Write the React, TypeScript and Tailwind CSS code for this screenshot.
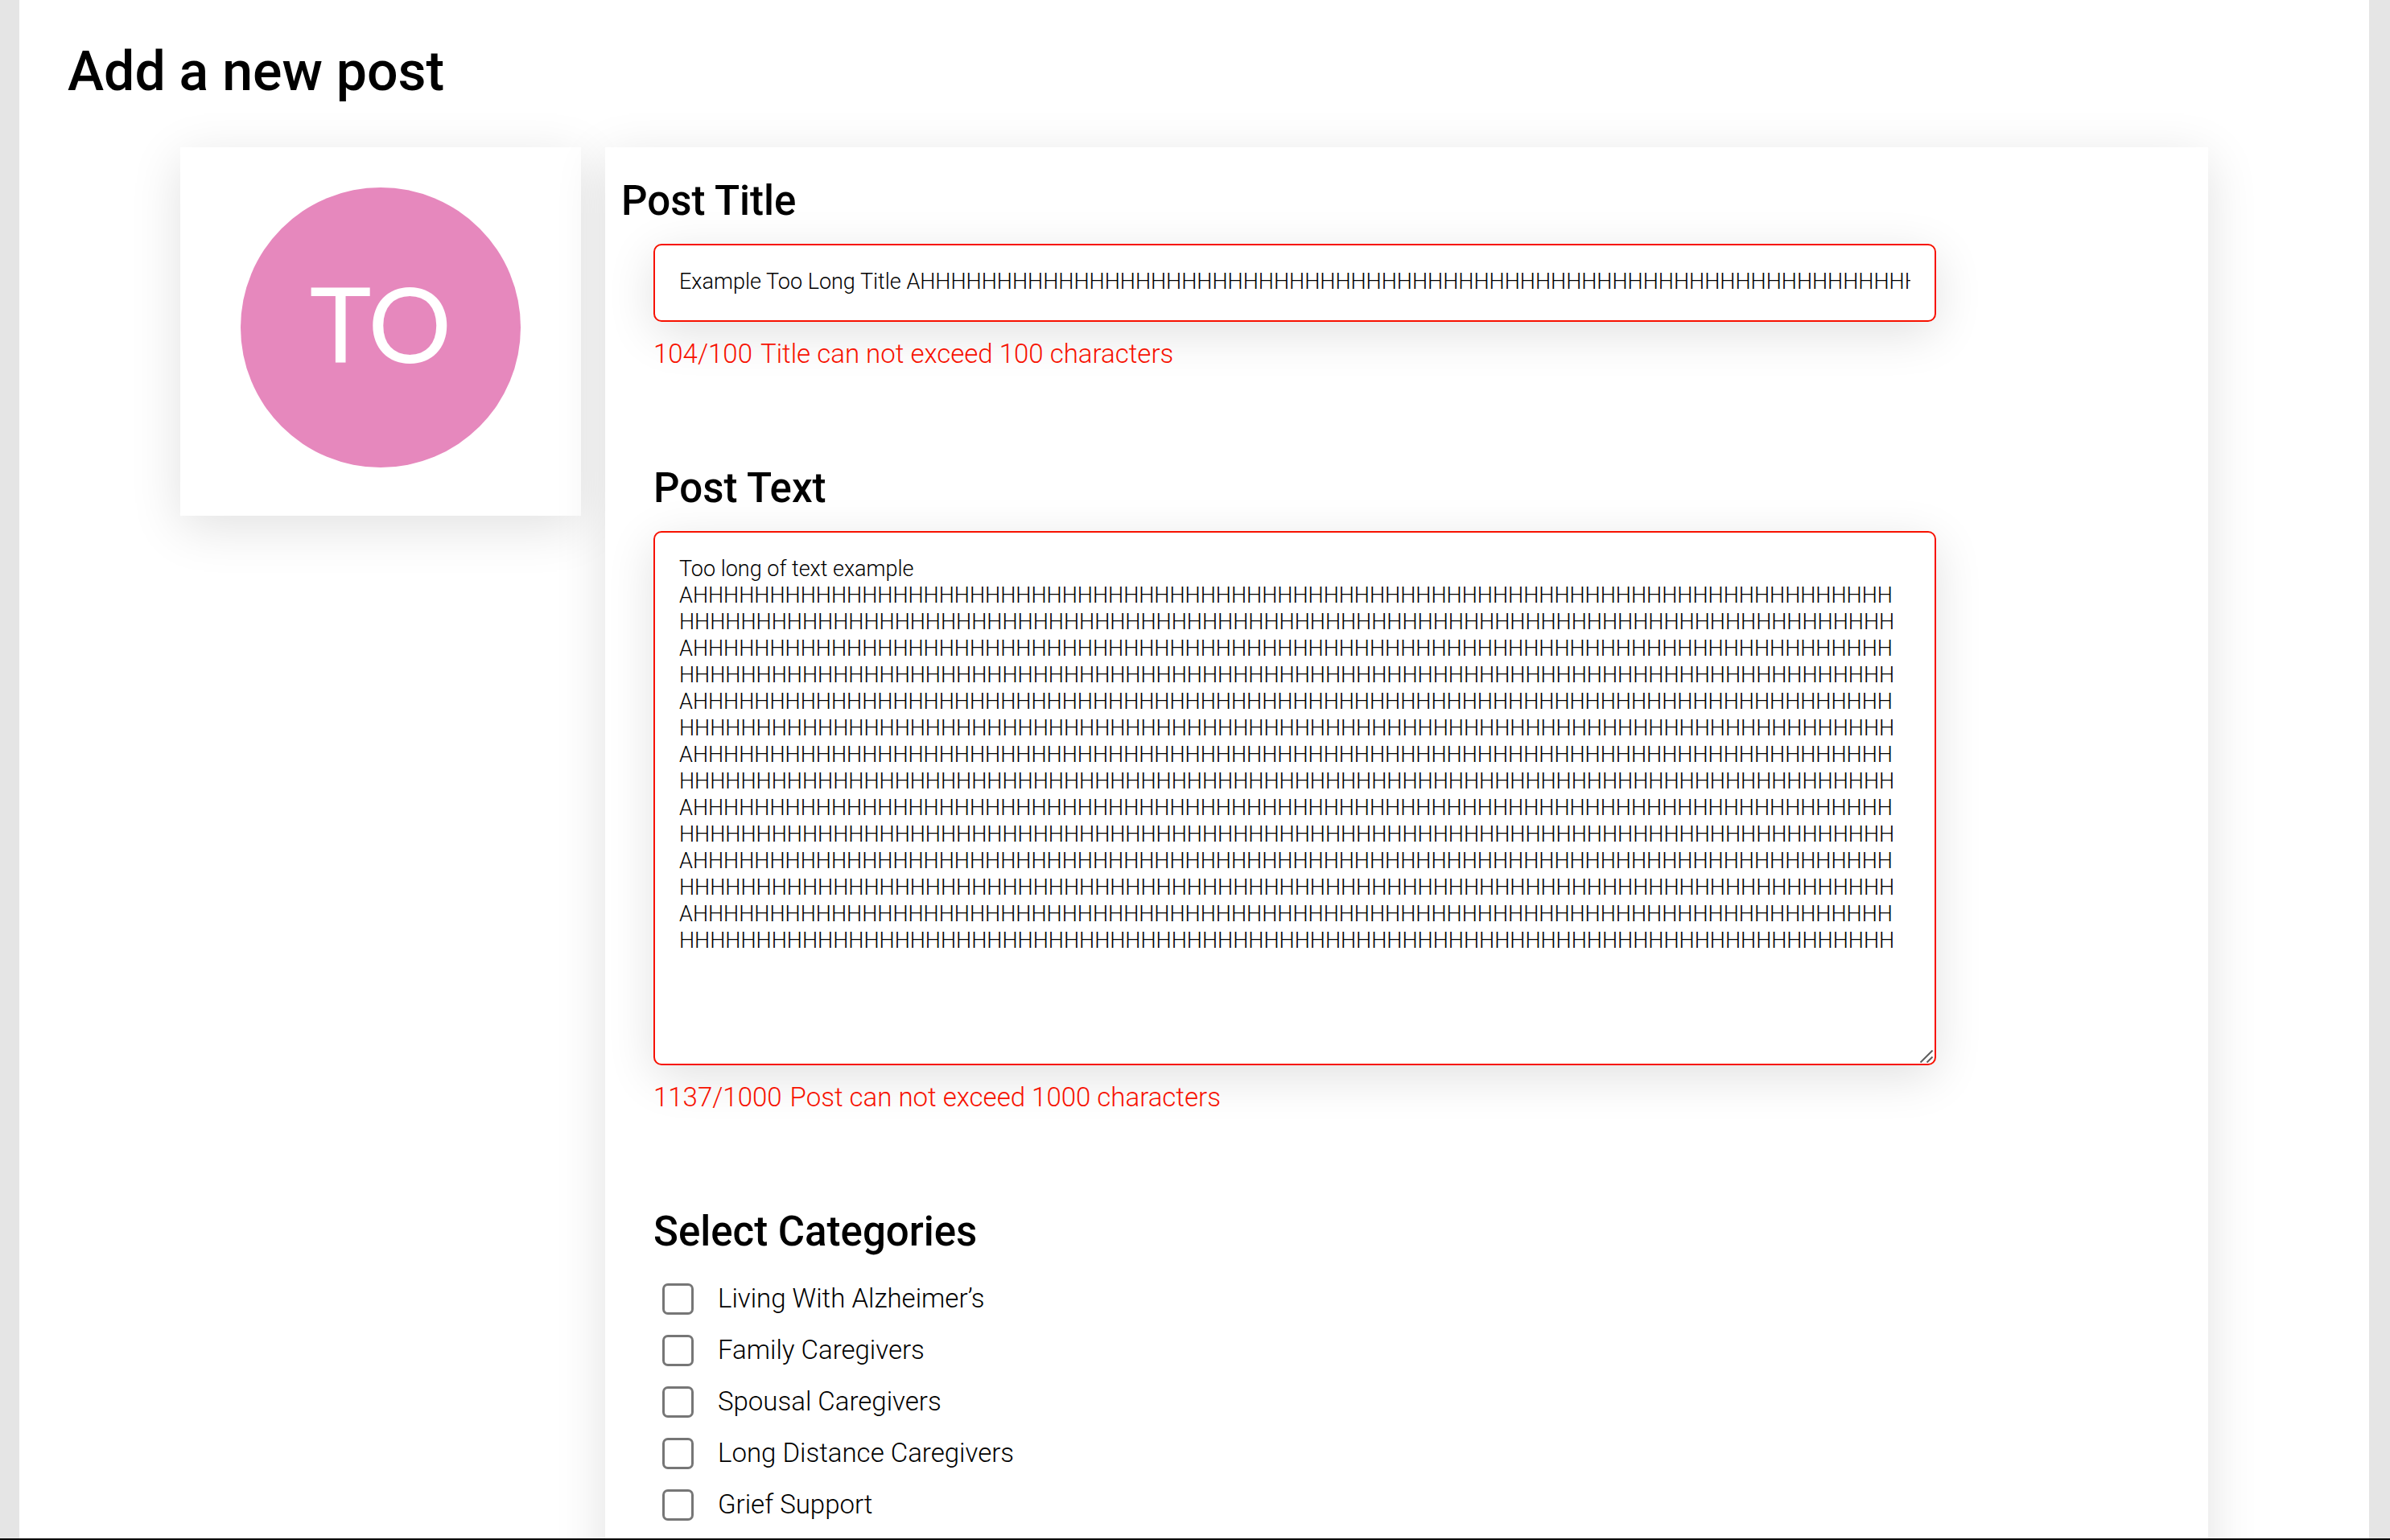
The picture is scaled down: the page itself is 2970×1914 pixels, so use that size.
import { useState } from 'react';

const TITLE_LIMIT = 100;
const TEXT_LIMIT = 1000;

const initialTitle = 'Example Too Long Title A' + 'H'.repeat(80);
const initialText = [
  'Too long of text example',
  ...Array.from({ length: 7 }, () => 'A' + 'H'.repeat(157)),
].join('\n');

const categories = [
  'Living With Alzheimer\u2019s',
  'Family Caregivers',
  'Spousal Caregivers',
  'Long Distance Caregivers',
  'Grief Support',
];

function AvatarCard() {
  return (
    <aside className="flex shrink-0 justify-center self-start bg-white px-[75px] pt-[50px] pb-[60px] shadow-[0_14px_60px_rgba(0,0,0,0.12)]">
      <div className="flex size-[348px] items-center justify-center rounded-full bg-[#e688bd] pb-3 font-['Lato',sans-serif] text-[130px] leading-none font-normal text-white">
        TO
      </div>
    </aside>
  );
}

function ResizeGrip() {
  return (
    <svg
      className="pointer-events-none absolute right-1 bottom-[3px] size-4"
      viewBox="0 0 16 16"
      fill="none"
      stroke="#5f5f5f"
      strokeWidth="2"
      aria-hidden="true"
    >
      <path d="M0.5 15.5L15.5 0.5M8.5 15.5L15.5 8.5" />
    </svg>
  );
}

function LimitMessage({ count, limit, subject }: { count: number; limit: number; subject: string }) {
  return (
    <p className="relative mt-5 flex gap-2.5 text-[33px] leading-10 text-[#f71100]">
      <span>
        {count}/{limit}
      </span>
      <span>
        {subject} can not exceed {limit} characters
      </span>
    </p>
  );
}

export default function App() {
  const [title, setTitle] = useState(initialTitle);
  const [text, setText] = useState(initialText);

  return (
    <div className="flex h-screen overflow-hidden border-b-2 border-black bg-[#e5e5e5] pr-[26px] pl-6 font-['Roboto',sans-serif] font-[350] text-black">
      <main className="flex flex-1 flex-col overflow-hidden bg-white">
        <h1 className="px-[60px] pt-[49px] pb-[54px] text-[68px] leading-20 font-medium">Add a new post</h1>

        <div className="-mb-[120px] flex flex-1 gap-[30px] px-[200px]">
          <AvatarCard />

          <form className="flex-1 bg-white shadow-[0_14px_60px_rgba(0,0,0,0.12)]">
            <label htmlFor="post-title" className="block px-5 pt-[37px] pb-[23px] text-[51px] leading-15 font-medium">
              Post Title
            </label>

            <div className="pl-[60px]">
              <div className="w-[82.5%]">
                <input
                  id="post-title"
                  type="text"
                  value={title}
                  onChange={(e) => setTitle(e.target.value)}
                  className="block h-[97px] w-full rounded-[10px] border-2 border-[#f71100] bg-white px-[30px] pb-1 text-[27px] shadow-[0_14px_60px_rgba(0,0,0,0.12)] outline-none"
                />
                <LimitMessage count={title.length} limit={TITLE_LIMIT} subject="Title" />

                <label htmlFor="post-text" className="mt-[117px] block pb-[23px] text-[51px] leading-15 font-medium">
                  Post Text
                </label>
                <div className="relative">
                  <textarea
                    id="post-text"
                    value={text}
                    onChange={(e) => setText(e.target.value)}
                    className="block h-[664px] w-full resize-none rounded-[10px] border-2 border-[#f71100] bg-white py-[29px] pr-9 pl-[30px] text-[27px] leading-[33px] break-all shadow-[0_14px_60px_rgba(0,0,0,0.12)] outline-none"
                  />
                  <ResizeGrip />
                </div>
                <LimitMessage count={text.length} limit={TEXT_LIMIT} subject="Post" />
              </div>

              <fieldset className="mt-[117px]">
                <legend className="pb-[21px] text-[51px] leading-15 font-medium">Select Categories</legend>
                {categories.map((category) => (
                  <label key={category} className="flex h-16 items-center gap-[30px] pl-[11px] text-[33px] leading-10">
                    <input
                      type="checkbox"
                      className="size-[39px] appearance-none rounded-[7px] border-3 border-[#767676] bg-white"
                    />
                    {category}
                  </label>
                ))}
              </fieldset>
            </div>
          </form>
        </div>
      </main>
    </div>
  );
}
